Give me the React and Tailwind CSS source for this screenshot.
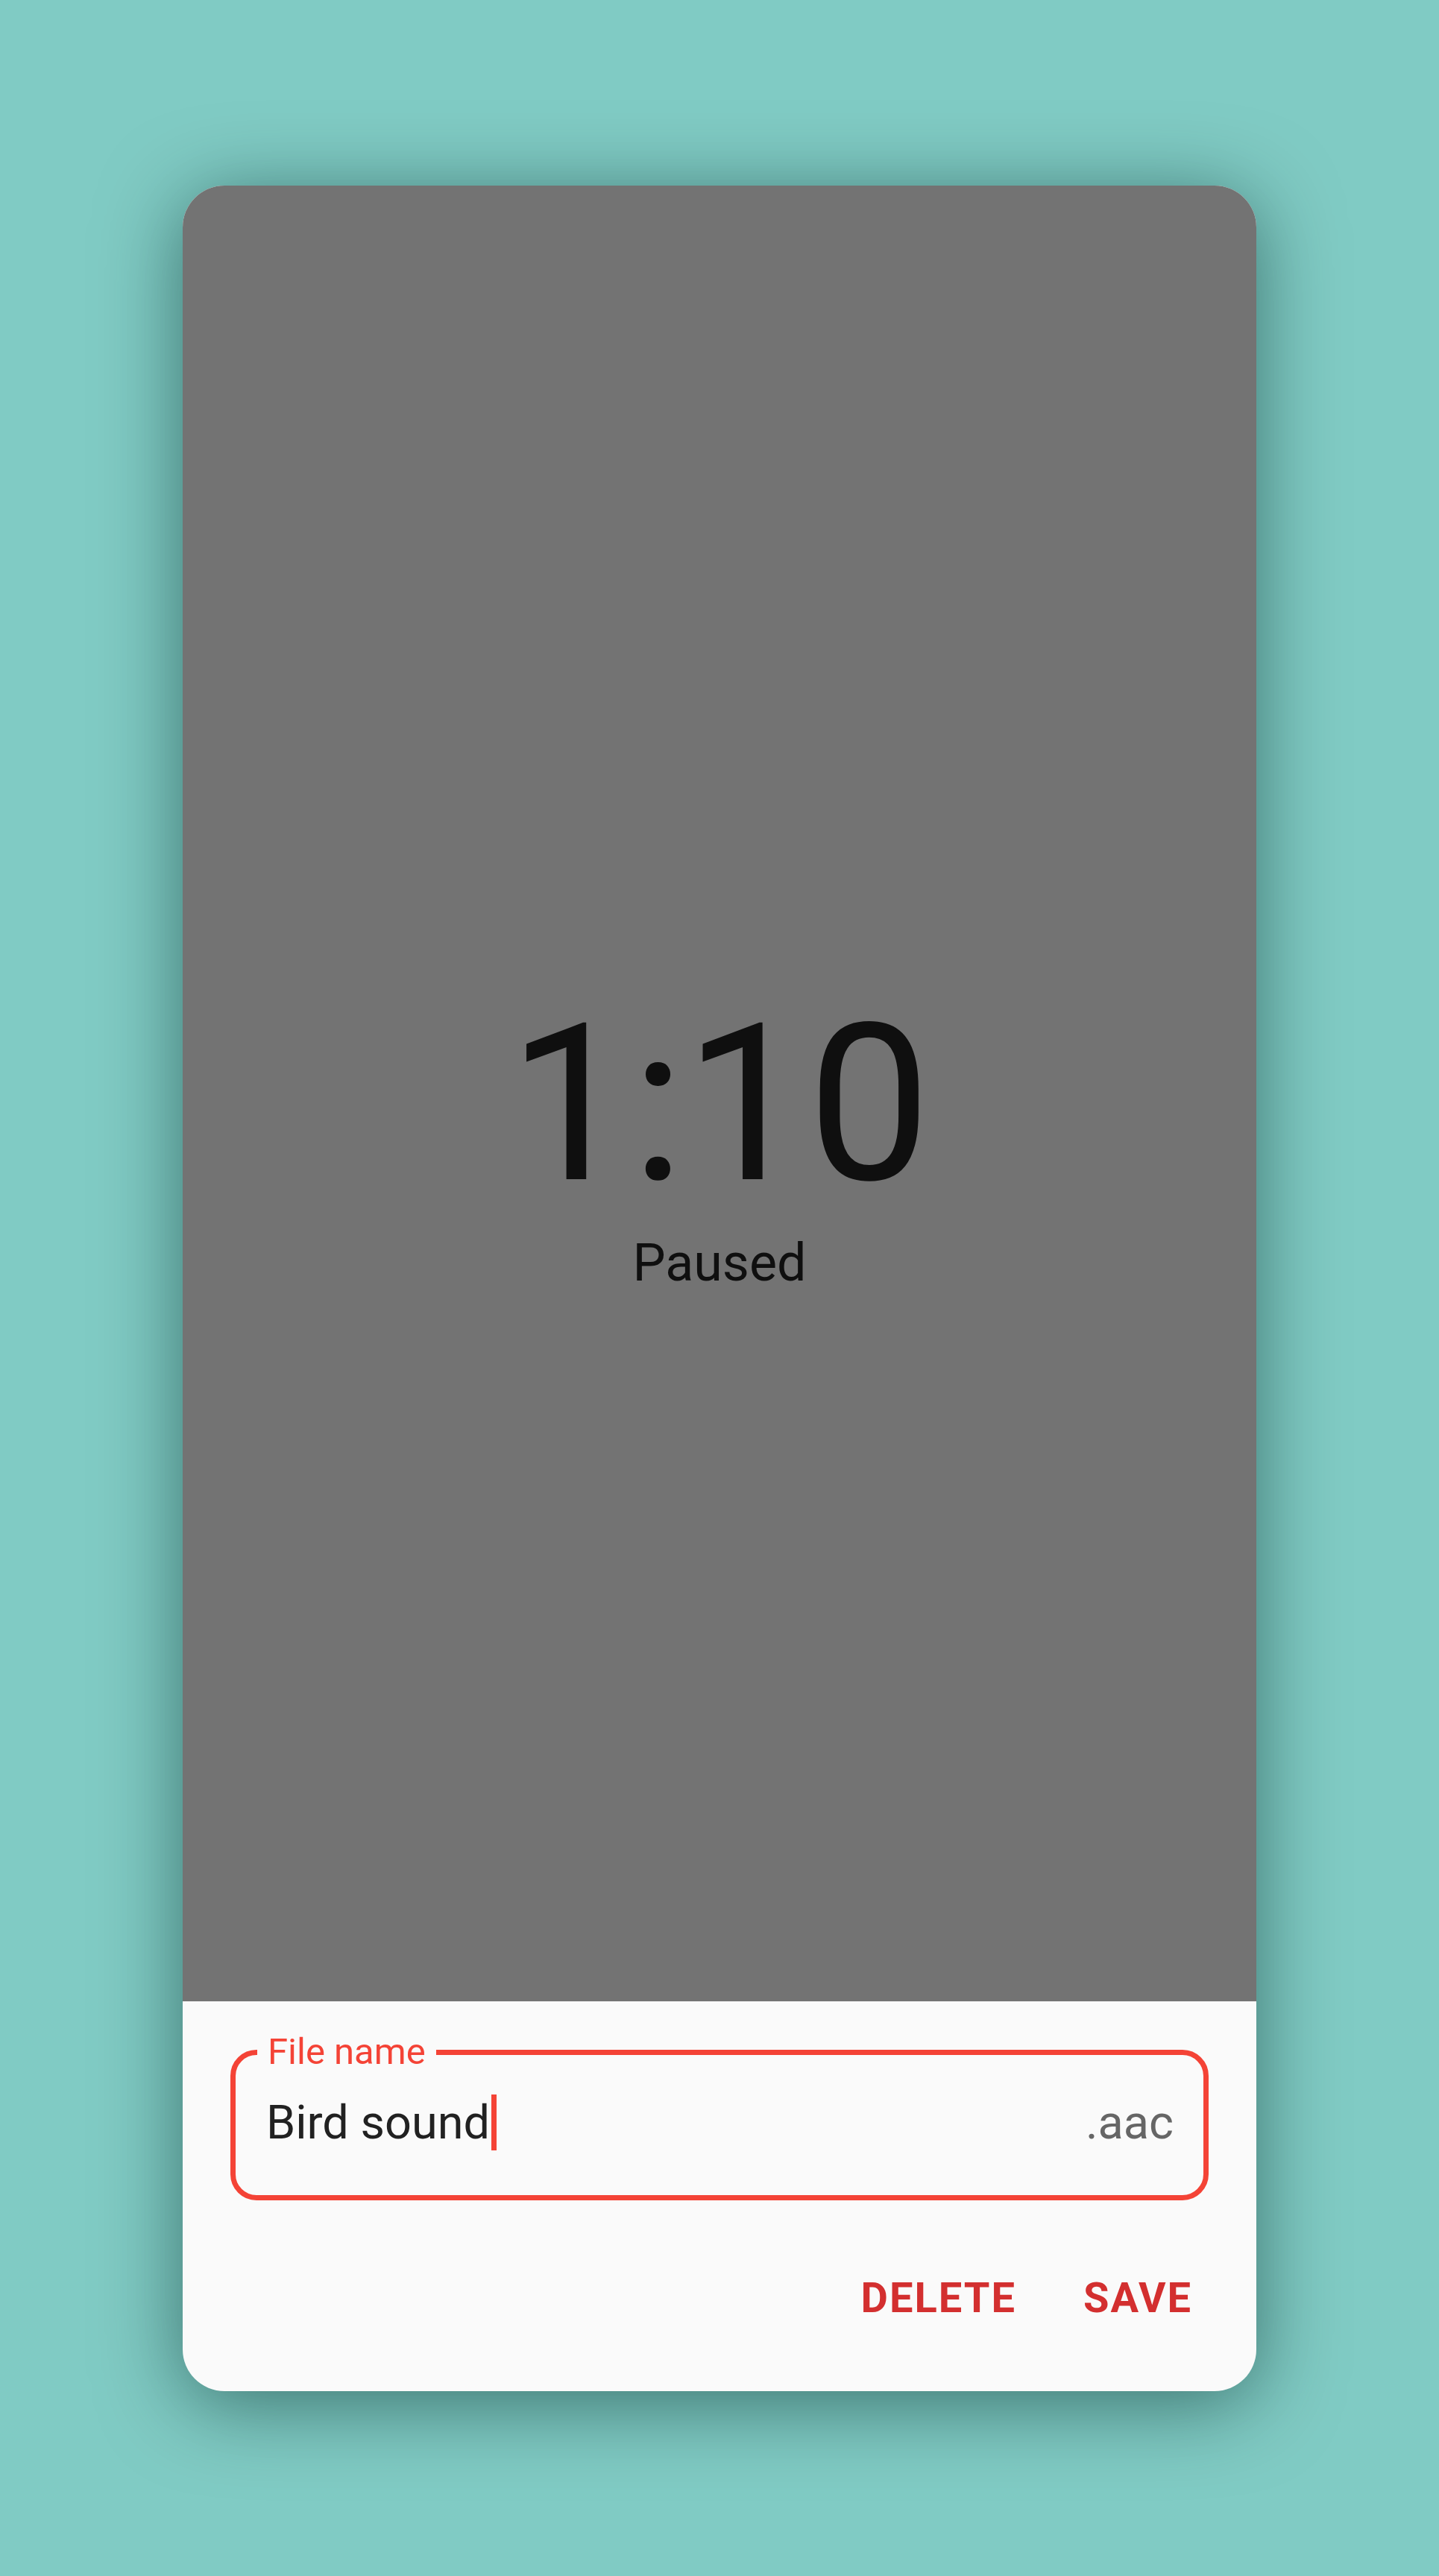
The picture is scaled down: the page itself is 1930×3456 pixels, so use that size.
export default function App() {
  return (
    <div
      className="w-full h-[3456px] flex items-center justify-center bg-[#80cbc4]"
      style={{ fontFamily: "Roboto, 'Noto Sans', sans-serif" }}
    >
      <div className="w-[1440px] h-[2959px] rounded-[56px] overflow-hidden flex flex-col bg-[#fafafa] shadow-[0_16px_110px_rgba(0,40,36,0.55)]">
        <div className="h-[2436px] shrink-0 bg-[#737373] flex flex-col items-center pt-[1086px]">
          <div className="text-[294px] leading-none font-normal text-[#0f0f0f]">1:10</div>
          <div className="mt-[30px] text-[70px] leading-none font-normal text-[#0f0f0f]">Paused</div>
        </div>
        <div className="flex-1 flex flex-col px-[64px] pt-[65px]">
          <div className="relative h-[202px] border-[7px] border-[#f44336] rounded-[35px] flex items-center pb-[7px] pl-[41px] pr-[40px]">
            <span className="absolute left-[29px] top-[-29px] px-[14px] bg-[#fafafa] text-[49px] leading-none text-[#f44336]">
              File name
            </span>
            <div className="flex items-center flex-1">
              <span className="text-[63px] leading-none text-[#212121]">Bird sound</span>
              <span className="inline-block ml-[2px] w-[7px] h-[75px] bg-[#f44336]"></span>
            </div>
            <span className="text-[63px] leading-none text-[#666666]">.aac</span>
          </div>
          <div className="flex justify-end gap-[90px] pr-[22px] pt-[103px]">
            <span className="text-[56px] leading-none font-bold tracking-[2px] text-[#d32f2f]">DELETE</span>
            <span className="text-[56px] leading-none font-bold tracking-[2px] text-[#d32f2f]">SAVE</span>
          </div>
        </div>
      </div>
    </div>
  );
}
